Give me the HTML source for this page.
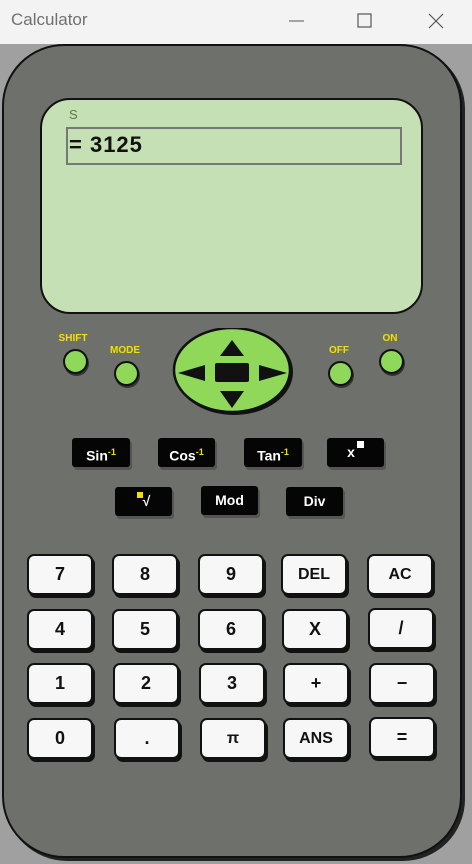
<!DOCTYPE html>
<html><head><style>
*{margin:0;padding:0;box-sizing:border-box}
body{width:472px;height:864px;overflow:hidden;background:#a0a0a0;font-family:"Liberation Sans",sans-serif;position:relative}
.title{position:absolute;left:0;top:0;width:472px;height:44px;background:#f3f3f3;}
.title span{position:absolute;left:11px;top:10px;font-size:17px;color:#707070}
.body{position:absolute;left:2px;top:44px;width:460px;height:814px;background:#6e706b;border:2px solid #111;border-radius:62px;box-shadow:3px 3px 0 #222}
.screen{position:absolute;left:40px;top:98px;width:383px;height:216px;background:#c5e0b4;border:2px solid #111;border-radius:30px}
.s{position:absolute;left:69px;top:107px;font-size:13px;color:#5a7a40}
.disp{position:absolute;left:66px;top:127px;width:336px;height:38px;border:2px solid #777;font-weight:bold;font-size:22px;letter-spacing:1px;padding:3px 0 0 1px;color:#111}
.c{position:absolute;width:25px;height:25px;border-radius:50%;background:#8fd85a;border:2px solid #111;box-shadow:1px 2px 0 #333}
.lbl{position:absolute;font-size:10px;font-weight:bold;color:#f3e000;transform:translateX(-50%)}
.bk{position:absolute;height:29px;background:#050505;border-radius:3px;color:#fff;font-weight:bold;font-size:14px;text-align:center;line-height:29px;box-shadow:2px 3px 0 #555}
.bk sup{color:#f3e000;font-size:9px}
.w{position:absolute;width:66px;height:41px;background:#f7f7f7;border:2px solid #111;border-radius:7px;box-shadow:2px 3px 0 #111;font-weight:bold;font-size:18px;text-align:center;line-height:37px;color:#111}
</style></head><body>
<div class="title"><span>Calculator</span>
<svg style="position:absolute;left:280px;top:10px" width="180" height="22"><line x1="9" y1="11" x2="24" y2="11" stroke="#555" stroke-width="1"/><rect x="78" y="4" width="13" height="13" fill="none" stroke="#555" stroke-width="1.2"/><path d="M149 4l14 14M163 4l-14 14" stroke="#555" stroke-width="1.2"/></svg></div>
<div class="body"></div>
<div class="screen"></div>
<div class="s">S</div>
<div class="disp">= 3125</div>
<div class="lbl" style="left:73px;top:333px">SHIFT</div><div class="c" style="left:63px;top:349px"></div>
<div class="lbl" style="left:125px;top:345px">MODE</div><div class="c" style="left:114px;top:361px"></div>
<div class="lbl" style="left:339px;top:345px">OFF</div><div class="c" style="left:328px;top:361px"></div>
<div class="lbl" style="left:390px;top:333px">ON</div><div class="c" style="left:379px;top:349px"></div>
<svg style="position:absolute;left:170px;top:328px" width="128" height="96">
<ellipse cx="64" cy="44" rx="59" ry="43" fill="#111"/>
<ellipse cx="62" cy="42" rx="58" ry="42" fill="#8fd85a" stroke="#111" stroke-width="2.5"/>
<polygon points="62,12 50,28 74,28" fill="#111"/><polygon points="62,80 50,63 74,63" fill="#111"/>
<polygon points="8,45 35,37 35,53" fill="#111"/><polygon points="117,45 89,37 89,53" fill="#111"/>
<rect x="45" y="35" width="34" height="19" rx="2" fill="#111"/></svg>
<div class="bk" style="left:72px;top:438px;width:58px">Sin<sup>-1</sup></div>
<div class="bk" style="left:158px;top:438px;width:57px">Cos<sup>-1</sup></div>
<div class="bk" style="left:244px;top:438px;width:58px">Tan<sup>-1</sup></div>
<div class="bk" style="left:327px;top:438px;width:57px">x<span style="display:inline-block;width:7px;height:7px;background:#fff;vertical-align:9px;margin-left:2px"></span></div>
<div class="bk" style="left:115px;top:487px;width:57px"><span style="display:inline-block;width:6px;height:6px;background:#f3e000;vertical-align:8px"></span>√</div>
<div class="bk" style="left:201px;top:486px;width:57px">Mod</div>
<div class="bk" style="left:286px;top:487px;width:57px">Div</div>
<div class="w" style="left:27px;top:554px">7</div><div class="w" style="left:112px;top:554px">8</div><div class="w" style="left:198px;top:554px">9</div><div class="w" style="left:281px;top:554px;font-size:16px">DEL</div><div class="w" style="left:367px;top:554px;font-size:16px">AC</div>
<div class="w" style="left:27px;top:609px">4</div><div class="w" style="left:112px;top:609px">5</div><div class="w" style="left:198px;top:609px">6</div><div class="w" style="left:282px;top:609px">X</div><div class="w" style="left:368px;top:608px">/</div>
<div class="w" style="left:27px;top:663px">1</div><div class="w" style="left:113px;top:663px">2</div><div class="w" style="left:199px;top:663px">3</div><div class="w" style="left:283px;top:663px">+</div><div class="w" style="left:369px;top:663px">−</div>
<div class="w" style="left:27px;top:718px">0</div><div class="w" style="left:114px;top:718px">.</div><div class="w" style="left:200px;top:718px;font-size:16px">π</div><div class="w" style="left:283px;top:718px;font-size:16px">ANS</div><div class="w" style="left:369px;top:717px">=</div>
</body></html>
